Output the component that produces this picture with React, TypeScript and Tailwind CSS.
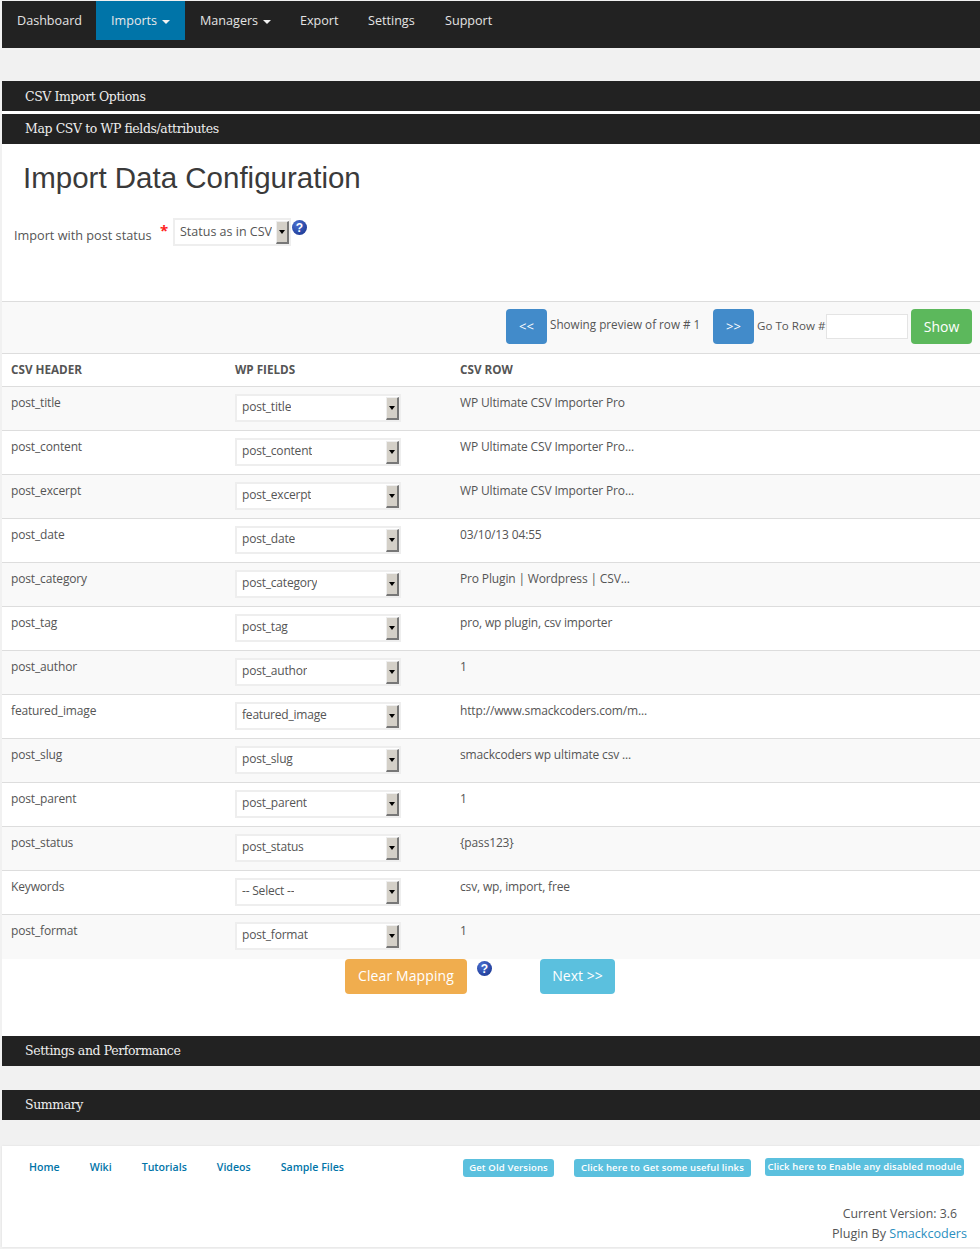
const rows = [
  ["post_title", "post_title", "WP Ultimate CSV Importer Pro"],
  ["post_content", "post_content", "WP Ultimate CSV Importer Pro..."],
  ["post_excerpt", "post_excerpt", "WP Ultimate CSV Importer Pro..."],
  ["post_date", "post_date", "03/10/13 04:55"],
  ["post_category", "post_category", "Pro Plugin | Wordpress | CSV..."],
  ["post_tag", "post_tag", "pro, wp plugin, csv importer"],
  ["post_author", "post_author", "1"],
  ["featured_image", "featured_image", "http://www.smackcoders.com/m..."],
  ["post_slug", "post_slug", "smackcoders wp ultimate csv ..."],
  ["post_parent", "post_parent", "1"],
  ["post_status", "post_status", "{pass123}"],
  ["Keywords", "-- Select --", "csv, wp, import, free"],
  ["post_format", "post_format", "1"],
];

const Caret = () => (
  <span className="ml-[5px] inline-block h-0 w-0 translate-y-[1px] border-x-[4px] border-t-[4px] border-x-transparent border-t-[#f2f2f2]" />
);

const HelpIcon = () => (
  <span className="flex h-[15px] w-[15px] items-center justify-center rounded-full bg-[radial-gradient(circle_at_35%_30%,#4a6fd0,#142f8a)] font-['Liberation_Sans',sans-serif] text-[12px] leading-none font-bold text-white">
    ?
  </span>
);

const SelectBox = ({ label, className, labelClass = "" }: { label: string; className: string; labelClass?: string }) => (
  <div className={`flex h-[28px] items-center justify-between border-2 border-[#eeeeee] bg-white pl-[5px] text-[#555555] ${className}`}>
    <span className={`truncate ${labelClass}`}>{label}</span>
    <span className="flex h-[23px] w-[13px] shrink-0 items-center justify-center border-t border-r-2 border-b-2 border-l border-t-[#eeeeee] border-r-[#777777] border-b-[#777777] border-l-[#eeeeee] bg-[#d4d0c8]">
      <span className="h-0 w-0 border-x-[3px] border-t-[4px] border-x-transparent border-t-black" />
    </span>
  </div>
);

const SectionBar = ({ title, className = "" }: { title: string; className?: string }) => (
  <div className={`h-[30px] bg-[#222222] pl-[23px] font-['DejaVu_Serif',serif] text-[12.5px] leading-[30px] tracking-[-0.4px] text-[#eeeeee] ${className}`}>
    {title}
  </div>
);

export default function App() {
  return (
    <div className="min-h-[1249px] bg-[#f1f1f1] pt-[1px] pl-[2px] font-['Open_Sans',sans-serif] text-[13px] text-[#555555]">
      <nav className="flex h-[47px] items-start bg-[#222222] text-[12.6px] text-[#e4e4e4]">
        <a className="flex h-[39px] w-[94px] items-center pt-[1px] pl-[15px]">Dashboard</a>
        <a className="flex h-[39px] w-[89px] items-center bg-[#0074a8] pt-[1px] pl-[15px] text-[#e8e8e8]">
          Imports
          <Caret />
        </a>
        <a className="flex h-[39px] w-[100px] items-center pt-[1px] pl-[15px]">
          Managers
          <Caret />
        </a>
        <a className="flex h-[39px] w-[69px] items-center pt-[1px] pl-[15px]">Export</a>
        <a className="flex h-[39px] w-[77px] items-center pt-[1px] pl-[14px]">Settings</a>
        <a className="flex h-[39px] items-center pt-[1px] pl-[14px]">Support</a>
      </nav>

      <SectionBar title="CSV Import Options" className="mt-[33px] pt-[1px]" />
      <div className="h-[3px] bg-white" />
      <SectionBar title="Map CSV to WP fields/attributes" />

      <section className="bg-white">
        <div className="h-[157px] pt-[14px]">
          <h1 className="pl-[21px] font-['Liberation_Sans',sans-serif] text-[29.5px] leading-[40px] text-[#3a3a3a]">
            Import Data Configuration
          </h1>
          <div className="mt-[20px] flex items-start pl-[12px]">
            <span className="mt-[8px] w-[146px] text-[12.7px] leading-[18px]">Import with post status</span>
            <span className="mt-[1px] w-[13px] text-[15px] font-bold text-[#ff2020]">*</span>
            <SelectBox label="Status as in CSV" className="w-[118px] text-[12.5px]" />
            <span className="mt-[2px] ml-[1px]">
              <HelpIcon />
            </span>
          </div>
        </div>

        <div className="flex h-[53px] justify-end border-y border-[#dddddd] bg-[#f9f9f9] pt-[7px] pr-[8px]">
          <button className="h-[35px] w-[41px] rounded-[4px] bg-[#428bca] text-[13px] text-white">&lt;&lt;</button>
          <span className="mt-[6px] ml-[3px] w-[163px] text-[11.7px] leading-[18px]">Showing preview of row # 1</span>
          <button className="h-[35px] w-[41px] rounded-[4px] bg-[#428bca] text-[13px] text-white">&gt;&gt;</button>
          <span className="mt-[8px] ml-[3px] w-[69px] text-[11.6px] leading-[18px] whitespace-nowrap">Go To Row #</span>
          <input className="mt-[5px] h-[25px] w-[82px] border border-[#e4e4e4] bg-white" />
          <button className="ml-[3px] h-[35px] w-[61px] rounded-[4px] bg-[#5cb85c] text-[14px] text-white">Show</button>
        </div>

        <div className="grid h-[33px] grid-cols-[224px_225px_1fr] items-center border-b border-[#dddddd] text-[11.7px] font-bold">
          <span className="pl-[9px]">CSV HEADER</span>
          <span className="pl-[9px]">WP FIELDS</span>
          <span className="pl-[9px]">CSV ROW</span>
        </div>

        {rows.map(([header, field, value], index) => (
          <div
            key={header}
            className={`grid h-[44px] grid-cols-[224px_225px_1fr] text-[12px] tracking-[-0.15px] ${index < rows.length - 1 ? "border-b border-[#dddddd]" : ""} ${index % 2 === 0 ? "bg-[#f9f9f9]" : "bg-white"}`}
          >
            <span className="pt-[6px] pl-[9px] leading-[20px]">{header}</span>
            <div className="pt-[7px] pl-[9px]">
              <SelectBox label={field} className="w-[166px] text-[12px] tracking-[-0.2px]" labelClass="pb-[2px]" />
            </div>
            <span className="pt-[6px] pl-[9px] leading-[20px]">{value}</span>
          </div>
        ))}

        <div className="flex h-[77px] items-start pl-[343px]">
          <button className="h-[35px] w-[122px] rounded-[4px] bg-[#f0ad4e] pb-[2px] text-[14px] tracking-[0.1px] text-white">Clear Mapping</button>
          <span className="mt-[2px] ml-[10px]">
            <HelpIcon />
          </span>
          <button className="ml-[48px] h-[35px] w-[75px] rounded-[4px] bg-[#5bc0de] pb-[2px] text-[14px] text-white">Next &gt;&gt;</button>
        </div>
      </section>

      <SectionBar title="Settings and Performance" />
      <SectionBar title="Summary" className="mt-[24px]" />

      <footer className="mt-[26px] h-[101px] bg-white shadow-[0_0_2px_#dddddd]">
        <div className="flex items-start justify-between pt-[12px] pr-[16px] pl-[27px]">
          <div className="mt-[2px] flex gap-[30px] text-[10.6px] font-semibold text-[#0074a8]">
            <a>Home</a>
            <a>Wiki</a>
            <a>Tutorials</a>
            <a>Videos</a>
            <a>Sample Files</a>
          </div>
          <div className="flex items-start text-[9.5px] font-semibold tracking-[0.15px] whitespace-nowrap text-white">
            <span className="mt-[1px] flex h-[18px] w-[91px] items-center justify-center rounded-[3px] bg-[#5bc0de]">Get Old Versions</span>
            <span className="mt-[1px] ml-[20px] flex h-[18px] w-[177px] items-center justify-center rounded-[3px] bg-[#5bc0de]">Click here to Get some useful links</span>
            <span className="ml-[14px] flex h-[18px] w-[199px] items-center justify-center rounded-[3px] bg-[#5bc0de]">Click here to Enable any disabled module</span>
          </div>
        </div>
        <div className="mt-[27px] pr-[13px] text-right text-[12.6px] leading-[20px]">
          <p className="pr-[10px] text-[12.3px]">Current Version: 3.6</p>
          <p>
            Plugin By <a className="text-[#2b8fc0]">Smackcoders</a>
          </p>
        </div>
      </footer>
    </div>
  );
}
